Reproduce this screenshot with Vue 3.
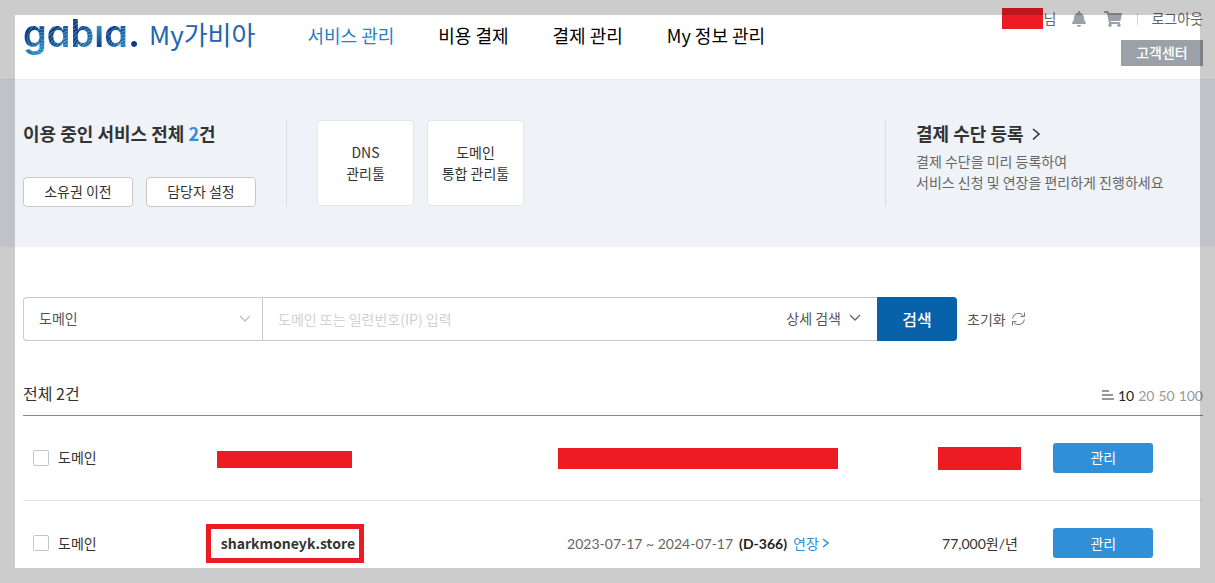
<script setup>
import { ref } from 'vue'

const logo = ['g', 'a', 'b', 'i', 'a', '.']
const menu = [
  { label: '서비스 관리', active: true },
  { label: '비용 결제' },
  { label: '결제 관리' },
  { label: 'My 정보 관리' },
]
const pageSizes = [10, 20, 50, 100]
const pageSize = ref(10)
const kind = ref('도메인')
const keyword = ref('')
const services = ref([
  { id: 1, type: '도메인', hidden: true, checked: false },
  {
    id: 2,
    type: '도메인',
    name: 'sharkmoneyk.store',
    period: '2023-07-17 ~ 2024-07-17',
    left: '(D-366)',
    price: '77,000원/년',
    checked: false,
  },
])
</script>

<template>
  <div class="page">
    <header class="header">
      <a href="#" class="brand">
        <span class="logo" aria-label="gabia."><span v-for="(c, i) in logo" :key="i" class="letter" :class="'l' + i">{{ c }}</span></span>
        <span class="brand-name">My가비아</span>
      </a>
      <nav class="menu">
        <a v-for="m in menu" :key="m.label" href="#" :class="{ active: m.active }">{{ m.label }}</a>
      </nav>
      <div class="user">
        <div class="user-bar">
          <span class="who"><span class="mask mask-user"></span>님</span>
          <button class="icon-btn bell" aria-label="알림">
            <svg width="14" height="16" viewBox="0 0 448 512"><path fill="#9aa0a8" d="M224 512c35.300 0 63.900-28.600 63.900-64H160.100c0 35.400 28.600 64 63.900 64zm215.400-149.700c-19.300-20.800-55.500-52-55.500-154.300 0-77.700-54.500-139.900-127.900-155.200V32c0-17.700-14.300-32-32-32s-32 14.300-32 32v20.800C118.600 68.100 64.100 130.300 64.100 208c0 102.300-36.200 133.500-55.500 154.300-6 6.400-8.700 14.100-8.600 21.700.1 16.400 13 32 32.100 32h383.800c19.100 0 32-15.600 32.100-32 .1-7.600-2.600-15.300-8.600-21.700z" /></svg>
          </button>
          <button class="icon-btn cart" aria-label="장바구니">
            <svg width="18" height="16" viewBox="0 0 576 512"><path fill="#9aa0a8" d="M528.100 301.300l47.300-208C578.800 78.300 567.400 64 552 64H159.200l-9.200-44.800C147.800 8 137.900 0 126.500 0H24C10.700 0 0 10.700 0 24v16c0 13.300 10.700 24 24 24h69.900l70.200 343.400C147.300 417.100 136 435.200 136 456c0 30.900 25.100 56 56 56s56-25.100 56-56c0-15.700-6.400-29.800-16.800-40h209.600C430.400 426.200 424 440.300 424 456c0 30.900 25.100 56 56 56s56-25.100 56-56c0-22.200-12.900-41.300-31.600-50.400l5.500-24.300c3.400-15-8-29.300-23.400-29.300H218.100l-6.500-32h293.100c11.200 0 20.900-7.800 23.400-18.700z" /></svg>
          </button>
          <a href="#" class="logout">로그아웃</a>
        </div>
        <button class="support">고객센터</button>
      </div>
    </header>

    <section class="summary">
      <div class="owned">
        <h2>이용 중인 서비스 전체 <em>2</em>건</h2>
        <div class="owned-actions">
          <button>소유권 이전</button>
          <button>담당자 설정</button>
        </div>
      </div>
      <div class="tools">
        <a href="#">DNS<br />관리툴</a>
        <a href="#">도메인<br />통합 관리툴</a>
      </div>
      <div class="payment">
        <h2>
          <a href="#">결제 수단 등록
            <svg width="10" height="14" viewBox="0 0 10 14"><path d="M2 2l6 5-6 5.500" fill="none" stroke="#333" stroke-width="1.600" /></svg>
          </a>
        </h2>
        <p>결제 수단을 미리 등록하여<br />서비스 신청 및 연장을 편리하게 진행하세요</p>
      </div>
    </section>

    <main class="content">
      <form class="search" @submit.prevent>
        <div class="search-box">
          <div class="kind">
            <select v-model="kind" aria-label="검색 구분">
              <option>도메인</option>
            </select>
            <svg width="12" height="8" viewBox="0 0 12 8"><path d="M1 1l5 5 5-5" fill="none" stroke="#bbb" stroke-width="1.200" /></svg>
          </div>
          <input v-model="keyword" type="text" aria-label="검색어" placeholder="도메인 또는 일련번호(IP) 입력" />
          <button type="button" class="detail">
            상세 검색
            <svg width="12" height="8" viewBox="0 0 12 8"><path d="M1 1l5 5 5-5" fill="none" stroke="#666" stroke-width="1.300" /></svg>
          </button>
          <button type="submit" class="submit">검색</button>
        </div>
        <button type="reset" class="reset">
          초기화
          <svg width="15" height="14" viewBox="0 0 15 14" fill="none" stroke="#777" stroke-width="1"><path d="M1.500 6.500A6 6 0 0 1 12.500 4M13.500 .5V4.500H9.500M13.500 7.500A6 6 0 0 1 2.500 10M1.500 13.500V9.500H5.500" /></svg>
        </button>
      </form>

      <div class="list-head">
        <strong>전체 2건</strong>
        <div class="sizes">
          <svg width="12" height="10" viewBox="0 0 12 10"><path d="M0 1h7M0 5h11M0 9h12" stroke="#999" stroke-width="2" /></svg>
          <button v-for="n in pageSizes" :key="n" :class="{ on: n === pageSize }" @click="pageSize = n">{{ n }}</button>
        </div>
      </div>

      <table class="services">
        <colgroup>
          <col class="c-type" /><col class="c-name" /><col class="c-period" /><col class="c-price" /><col class="c-action" />
        </colgroup>
        <tbody>
          <tr v-for="s in services" :key="s.id">
            <td class="type">
              <label><input v-model="s.checked" type="checkbox" />{{ s.type }}</label>
            </td>
            <template v-if="s.hidden">
              <td><span class="mask mask-name"></span></td>
              <td><span class="mask mask-period"></span></td>
              <td><span class="mask mask-price"></span></td>
            </template>
            <template v-else>
              <td><a href="#" class="name">{{ s.name }}</a></td>
              <td>
                <div class="period">
                  <span>{{ s.period }}</span>
                  <b>{{ s.left }}</b>
                  <a href="#">연장<svg width="7" height="10" viewBox="0 0 7 10"><path d="M1 1l5 4-5 4" fill="none" stroke="#2f90d8" stroke-width="1.500" /></svg></a>
                </div>
              </td>
              <td class="price">{{ s.price }}</td>
            </template>
            <td class="action"><button>관리</button></td>
          </tr>
        </tbody>
      </table>
    </main>
    <div class="frame"></div>
  </div>
</template>

<style>
body {
  margin: 0;
  background: #fff;
}
</style>

<style scoped>
.page {
  min-height: 100vh;
  color: #333;
  font: 14px/21px "Noto Sans CJK KR", "Noto Sans", sans-serif;
}
.page * {
  box-sizing: border-box;
}
a {
  color: inherit;
  text-decoration: none;
}
button,
input,
select {
  margin: 0;
  padding: 0;
  border: 0;
  background: none;
  color: inherit;
  font: inherit;
}
button {
  cursor: pointer;
}
h2,
p {
  margin: 0;
}
svg {
  display: block;
  flex: none;
}
.frame {
  position: fixed;
  inset: 0;
  border: 15px solid rgba(0, 0, 0, 0.2);
  pointer-events: none;
}
.mask {
  display: inline-block;
  background: #ed1c24;
  vertical-align: middle;
}

.header {
  display: flex;
  height: 80px;
  padding: 0 12px 0 23px;
  border-bottom: 1px solid #e9ebee;
}
.brand {
  display: flex;
  align-items: center;
  gap: 9px;
  height: 66px;
}
.logo {
  display: flex;
  font: 600 38px/48px Inter, "Open Sans", sans-serif;
  font-feature-settings: "cv11";
}
.letter {
  background: repeating-radial-gradient(circle at 110% 100%, transparent 0 2px, rgba(255, 255, 255, 0.25) 2px 3px), linear-gradient(120deg, #083c86 35%, #2a86c4 85%);
  background-clip: text;
  color: transparent;
}
.l0 {
  background-image: repeating-radial-gradient(circle at 80% 60%, transparent 0 2px, rgba(255, 255, 255, 0.2) 2px 3px), linear-gradient(135deg, #083c86 40%, #2a90cc 85%);
}
.l3 {
  background-image: linear-gradient(transparent 16px, #3b93cc 16px, #0b4a94 36px);
}
.l5 {
  background-image: linear-gradient(#083c86, #083c86);
}
.brand-name {
  color: #1f65b0;
  font-size: 26px;
}
.menu {
  display: flex;
  gap: 44px;
  align-items: center;
  height: 70px;
  margin-left: 52px;
  color: #000;
  font-size: 18px;
  white-space: nowrap;
}
.menu .active {
  color: #2581c4;
}
.user {
  display: flex;
  flex-direction: column;
  align-items: flex-end;
  gap: 3px;
  margin-left: auto;
}
.user-bar {
  display: flex;
  align-items: center;
  height: 37px;
  color: #666;
  white-space: nowrap;
}
.who {
  display: flex;
  gap: 1px;
}
.mask-user {
  width: 41px;
  height: 21px;
}
.bell {
  margin-left: 16px;
}
.cart {
  margin-left: 18px;
}
.logout {
  display: flex;
  align-items: center;
  margin-left: 15px;
}
.logout::before {
  width: 1px;
  height: 12px;
  margin-right: 13px;
  background: #d5d5d5;
  content: "";
}
.support {
  width: 82px;
  height: 26px;
  padding-bottom: 2px;
  background: #9ba1a9;
  color: #fff;
  font-weight: 500;
}

.summary {
  display: flex;
  padding: 40px 12px 40px 23px;
  background: #eff3f8;
}
.summary h2 {
  font-size: 18px;
  font-weight: 700;
  line-height: 27px;
}
.summary em {
  color: #2f90d8;
  font-style: normal;
}
.owned {
  display: flex;
  flex-direction: column;
  justify-content: space-between;
  width: 264px;
  height: 87px;
  border-right: 1px solid #dadde1;
}
.owned-actions {
  display: flex;
  gap: 13px;
}
.owned-actions button {
  width: 110px;
  height: 30px;
  padding-bottom: 2px;
  border: 1px solid #c8c8c8;
  border-radius: 4px;
  background: #fff;
}
.tools {
  display: flex;
  gap: 13px;
  margin-left: 30px;
}
.tools a {
  display: flex;
  align-items: center;
  justify-content: center;
  width: 97px;
  height: 86px;
  border: 1px solid #e4e7ea;
  border-radius: 4px;
  background: #fff;
  text-align: center;
}
.payment {
  width: 318px;
  margin-left: auto;
  padding-left: 30px;
  border-left: 1px solid #dadde1;
}
.payment h2 a {
  display: flex;
  align-items: center;
  gap: 7px;
}
.payment p {
  margin-top: 4px;
  color: #666;
}

.content {
  padding: 50px 12px 0 23px;
}
.search {
  display: flex;
  gap: 10px;
  color: #555;
}
.search-box {
  display: flex;
  flex: 0 1 934px;
  height: 44px;
  border: 1px solid #c8cacb;
  border-right: 0;
  border-radius: 4px;
}
.kind {
  display: flex;
  align-items: center;
  width: 239px;
  padding-right: 11px;
  border-right: 1px solid #c8cacb;
}
.kind select {
  flex: 1;
  height: 42px;
  padding: 0 0 2px 15px;
  appearance: none;
}
.search-box input {
  flex: 1;
  min-width: 0;
  padding-left: 15px;
}
.search-box input::placeholder {
  color: #d2d2d2;
}
.detail {
  display: flex;
  align-items: center;
  gap: 8px;
  padding: 0 16px 2px 0;
}
.submit {
  width: 80px;
  margin: -1px 0;
  border-radius: 0 4px 4px 0;
  background: #0761a9;
  color: #fff;
  font-size: 16px;
  font-weight: 500;
}
.reset {
  display: flex;
  align-items: center;
  gap: 5px;
}
.list-head {
  display: flex;
  align-items: center;
  justify-content: space-between;
  height: 43px;
  margin-top: 32px;
  padding-bottom: 2px;
  border-bottom: 1px solid #888;
}
.list-head strong {
  font-size: 16px;
  font-weight: 400;
}
.sizes {
  display: flex;
  align-items: center;
  gap: 4px;
  padding-top: 4px;
  color: #999;
  font-family: Lato, sans-serif;
}
.sizes .on {
  color: #222;
}

.services {
  width: 100%;
  border-collapse: collapse;
  table-layout: fixed;
}
.c-type {
  width: 7.4%;
}
.c-name {
  width: 29.6%;
}
.c-period {
  width: 40.4%;
}
.c-price {
  width: 7.4%;
}
.c-action {
  width: 15.2%;
}
.services td {
  height: 84px;
  padding: 0;
  text-align: center;
  white-space: nowrap;
}
.services tr + tr td {
  height: 82px;
  padding-top: 4px;
  border-top: 1px solid #e2e2e2;
}
.services label {
  display: flex;
  align-items: center;
  gap: 9px;
  padding-left: 10px;
}
.services input {
  width: 16px;
  height: 16px;
  border: 1px solid #c4c6c8;
  border-radius: 2px;
  background: #fff;
  appearance: none;
}
.services input:checked {
  background: #2f90d8;
}
.mask-name {
  width: 135px;
  height: 17px;
}
.mask-period {
  width: 280px;
  height: 21px;
}
.mask-price {
  width: 83px;
  height: 23px;
}
.name {
  display: inline-block;
  padding: 4px 4px 4px 10px;
  border: 5px solid #ed1c24;
  font-weight: 700;
}
.period {
  display: flex;
  align-items: center;
  justify-content: center;
  gap: 6px;
  color: #666;
  font-family: Lato, "Noto Sans CJK KR", sans-serif;
}
.period b {
  color: #222;
}
.period a {
  display: flex;
  align-items: center;
  gap: 3px;
  color: #2f90d8;
}
.price {
  font-family: Lato, "Noto Sans CJK KR", sans-serif;
}
.services .action {
  padding-right: 20px;
}
.action button {
  width: 100px;
  height: 30px;
  border-radius: 3px;
  background: #2f90d8;
  color: #fff;
}
</style>
